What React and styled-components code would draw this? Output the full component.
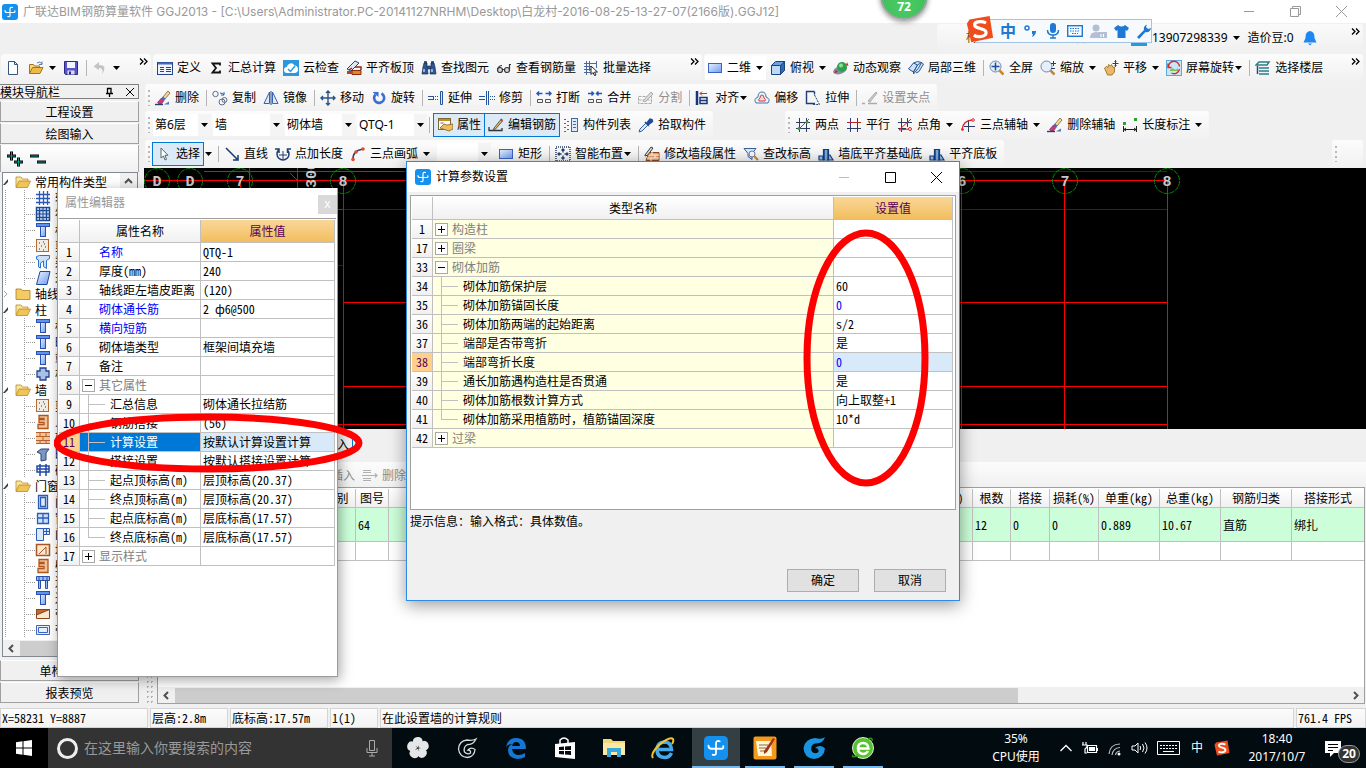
import React from 'react'
import styled, { createGlobalStyle, css } from 'styled-components'

const GlobalStyle = createGlobalStyle`
  * { box-sizing: border-box; }

  body {
    margin: 0;
    overflow: hidden;
    background: #f0f0f0;
    color: #000;
    font: 12px/16px "Noto Sans", "Noto Sans CJK SC", sans-serif;
  }

  button, input, select {
    font: inherit;
    color: inherit;
  }

  button {
    border: 0;
    padding: 0;
    background: none;
  }
`

const line = '#c0c0c0'

const gridFont = css`
  font-family: "Noto Sans CJK SC", sans-serif;
  font-feature-settings: "hwid" 1;
`

/* ---------- icons ---------- */

const rect2d = <rect x="1.5" y="3.5" width="13" height="9" fill="url(#sky)" stroke="#3a63c8" />

const brush = (
  <g>
    <path d="M0 14.5h8" stroke="#24406f" strokeWidth="1.4" />
    <path d="M8 7l5-6 2 2-5 6z" fill="#f3d9a0" stroke="#7d5a2a" strokeWidth=".8" />
    <path d="M6.5 8L9 10.5l1.5-1.5-2.5-2.5z" fill="#3b6fd0" />
    <path d="M2.5 12.5L6.5 8 9 10.5l-2.5 3.5H4z" fill="#c93a7d" stroke="#5a2145" strokeWidth=".6" />
    <path d="M9 14.5l5-3v3z" fill="#4a76c0" />
  </g>
)

const magnifier = (
  <g>
    <path d="M10 10l4.5 4.5" stroke="#c9862b" strokeWidth="2.5" />
    <circle cx="6.5" cy="6.5" r="5.5" fill="#e4effb" stroke="#7288a8" />
  </g>
)

const wallFoot = (
  <g fill="#9cc0ea" stroke="#123f80" strokeWidth="1.2">
    <path d="M1 14v-4h4v4zM10 14V9l2 0 3 5z" />
    <path d="M5.5 14V3.500h5V14z" fill="#2d62a8" />
    <path d="M8 4v10" stroke="#dfeafa" strokeWidth="1" />
  </g>
)

const logo = (
  <g fill="none" stroke="#fff" strokeWidth="1.2" strokeLinecap="round">
    <rect width="16" height="16" rx="3" fill="#1490ee" stroke="none" />
    <path d="M10.500 3.500Q8 2.800 8 5v6.500Q8 13 5.800 12.500" />
    <path d="M3 6.500Q3 8.500 5 8.500h7Q13.300 8.300 12.800 6.800" />
  </g>
)

const sogou = (
  <g>
    <path d="M2 2.5L13.5.5 15.5 13 3 15.5.5 5z" fill="#ef4d1d" />
    <path d="M11.5 4.500C8 3 4.500 4 5 6s6.500 1.500 6.500 4S6.500 13 4.500 11.500" fill="none" stroke="#fff" strokeWidth="1.800" />
  </g>
)

const pillar = (
  <g stroke="#2a4fb5">
    <rect x="1.5" y="1.5" width="13" height="3" fill="#5f93ea" />
    <rect x="5.5" y="4.5" width="5" height="10" fill="url(#sky)" />
  </g>
)

const icons = {
  logo,
  sogou,
  brush,
  wallFoot,
  rect2d,
  newDoc: <path d="M3.5 1.5h6l3 3v10h-9zM9.5 1.5v3h3" fill="#fff" stroke="#33557f" />,
  open: (
    <g stroke="#a8741a">
      <path d="M1.5 13.5v-9h4l1 1.5h5v3" fill="#f7d684" />
      <path d="M1.5 13.5l3-6h10.5l-3 6z" fill="#efb94a" />
      <path d="M9 3q3-2.5 5 1m0-2.5v3h-3" fill="none" stroke="#5b7da8" />
    </g>
  ),
  save: (
    <g>
      <path d="M1.5 1.5h13v13h-12l-1-1z" fill="#5a55c8" stroke="#2d2a86" />
      <path d="M4 2h8v6H4z" fill="#f2f4ff" />
      <path d="M4.5 10.5h7v4h-7z" fill="#d8dcf4" />
      <path d="M6 11.5h2v3H6z" fill="#2d2a86" />
    </g>
  ),
  undo: <path d="M7 2L1.500 6.500 7 10V8q4.500-.500 3 6 6-9-3-9z" fill="#c4c4c4" />,
  define: (
    <g>
      <rect x=".5" y="2.5" width="15" height="12" fill="#eef3fc" stroke="#23468c" />
      <path d="M1 3.5h14" stroke="#3e6bbd" strokeWidth="2" />
      <path d="M3 7.5h4M3 9.5h4M3 11.5h4M9 7.5h5M9 9.5h5M9 11.5h5" stroke="#23468c" />
    </g>
  ),
  sigma: <path d="M12 5.500V3.500H4.500L8 8l-3.500 4.500H12v-2" fill="none" stroke="#111" strokeWidth="1.800" />,
  cloudCheck: (
    <g>
      <rect width="16" height="16" fill="#2b97dc" />
      <path d="M4 13a3 3 0 010-6 4 4 0 017.5-1.5A3.800 3.800 0 0112 13z" fill="#fff" />
      <path d="M5 9l2.5 2.5L12 6" fill="none" stroke="#2b97dc" strokeWidth="1.5" />
    </g>
  ),
  slabTop: (
    <g>
      <path d="M1 9l8-8 4 2-8 8z" fill="#dfe8f5" stroke="#27447c" />
      <path d="M6 10.5h9v4H6z" fill="#d88a2e" stroke="#8a2b12" />
      <path d="M1 11h5v3H1z" fill="#b8412a" />
      <path d="M6 8l-3 2M9 7h6v3" fill="none" stroke="#8a2b12" strokeWidth="1.5" />
    </g>
  ),
  find: (
    <g fill="#2f5590" stroke="#162f5c" strokeWidth=".7">
      <path d="M3 3h3v3l1 8H1l1-7zM10 3h3l1 4 1 7H9l1-8z" />
      <path d="M6.5 6h3v3h-3zM3.5 1.5h2V3h-2zM10.5 1.5h2V3h-2z" />
      <path d="M3 9v3M11 9v3" stroke="#cfe0f5" strokeWidth="1.3" />
    </g>
  ),
  glasses: (
    <g fill="none" stroke="#333" strokeWidth="1.2">
      <circle cx="4" cy="10" r="2.500" fill="#cfd6dd" />
      <circle cx="11" cy="10" r="2.500" fill="#cfd6dd" />
      <path d="M6.500 9.500h2M1.500 9Q3 5.500 6 5.500M13.500 9.500V4.500h1.500" />
    </g>
  ),
  batch: (
    <g fill="none" stroke="#4a6a9a">
      <path d="M3.500 1v14M1 3.500h13M1 6.500h7M1 9.500h7M1 12.500h7M6.500 1v10M13.500 1v7" />
      <path d="M8 6l6.500 6h-3l1.500 3-1.500.5-1.500-3-2 2z" fill="#fff" stroke="#222" />
    </g>
  ),
  cube: (
    <g stroke="#1c4580">
      <path d="M1.5 5.5h9v9h-9z" fill="#bcd9f7" />
      <path d="M1.5 5.5l4-4h9l-4 4z" fill="#6d9fe0" />
      <path d="M10.5 5.5l4-4v9l-4 4z" fill="#3568b4" />
    </g>
  ),
  orbit: (
    <g>
      <ellipse cx="7" cy="10" rx="7" ry="4" fill="#7f8fa8" transform="rotate(-20 7 10)" />
      <circle cx="9" cy="7" r="5" fill="#2fa04a" />
      <circle cx="8" cy="5.5" r="2" fill="#8be09a" />
      <path d="M1 13l4-1-2-2zM14 2l1.5 4L13 5z" fill="#c42222" />
    </g>
  ),
  local3d: (
    <g fill="#cfe2f7" stroke="#27578f">
      <path d="M.500 9l5-6 4 2-4 7zM5.500 3l4-1.500 4 1-4 2.500M9.500 5l-4 7v2l5-6 3-5.500 2 1.500-4.500 7.500-3 1.500" />
    </g>
  ),
  full: (
    <g>
      {magnifier}
      <path d="M6.5 2.5v8M2.5 6.5h8" stroke="#1d4d9c" strokeWidth="1.5" />
    </g>
  ),
  zoomer: (
    <g>
      {magnifier}
      <path d="M11 3.5h5M13.5 1v5M11 8.5h4" stroke="#1f4170" />
    </g>
  ),
  pan: (
    <g>
      <path d="M1.500 8l2-1.500 1.500 1 .5-3 2 1.500 1-1.500 1.500 3 1.500-.5v5L9 15H4.500z" fill="#eab868" stroke="#93661e" strokeWidth=".8" />
      <path d="M12.500.500v6M9.500 3.500h6M11.500 1.500l1-1 1 1M11.500 5.500l1 1 1-1" fill="none" stroke="#26426f" />
    </g>
  ),
  screenRotate: (
    <g>
      <rect x=".5" y=".5" width="15" height="15" fill="#c9e6f7" stroke="#5aa9dc" />
      <path d="M4 10q2-3 4-1t4-1v3H4z" fill="#7cc05a" />
      <path d="M2.500 7a5.500 5.500 0 0111-.5M13.500 9a5.500 5.500 0 01-8 4M2 3.500V7.500h3.500" fill="none" stroke="#d42d2d" strokeWidth="1.4" />
    </g>
  ),
  floors: (
    <g fill="none" stroke="#2c7c86" strokeWidth="1.5">
      <path d="M1 5l3-3h10l-2 3zM4 8h10M4 11h10M4 14h10" />
      <path d="M2.5 6v8" stroke="#1d4a80" />
    </g>
  ),
  copy: (
    <g fill="none" stroke="#5d6f8c">
      <circle cx="3.5" cy="4" r="2.7" />
      <circle cx="10" cy="12" r="3" />
      <circle cx="12.500" cy="10" r="2.500" />
      <path d="M8 3q3 0 4 2m0-3v3H9" stroke="#2d56a8" />
    </g>
  ),
  mirror: (
    <g fill="none" stroke="#3b64b0">
      <path d="M6.5 2v11.500H1zM9.5 2v11.500H15z" fill="#dce9fa" />
      <path d="M8 1v14" stroke="#28467c" />
    </g>
  ),
  move: <path d="M8 1v14M1 8h14M6 3l2-2 2 2M6 13l2 2 2-2M3 6L1 8l2 2M13 6l2 2-2 2" fill="none" stroke="#2e5288" strokeWidth="1.4" />,
  rotate: (
    <g fill="none" stroke="#3a6fd0" strokeWidth="2.600">
      <path d="M10.500 3.500a5 5 0 11-6 1" />
      <path d="M1.500 2h6v5z" fill="#3a6fd0" stroke="none" />
    </g>
  ),
  extend: (
    <g fill="none" stroke="#24549c">
      <path d="M0 6.500h5M0 9.500h5M5.500 6v4" />
      <path d="M7 6.500h4M7 9.500h4" strokeDasharray="1 1" />
      <path d="M12.500 1.500h2v13h-2z" fill="#dce9fa" />
    </g>
  ),
  trim: (
    <g fill="none" stroke="#24549c">
      <path d="M0 6.500h6M0 9.500h6M7.500 1v14M9.500 1v14" />
      <path d="M11 6.500h5M11 9.500h5" strokeDasharray="1 1" />
    </g>
  ),
  breakup: (
    <g fill="none" stroke="#2458b8">
      <path d="M6.500 3.500H1m2-2l-2 2 2 2M9.500 3.500H15m-2-2l2 2-2 2" strokeWidth="1.500" />
      <path d="M1.500 9.500h5v3h-5zM9.500 9.500h5v3h-5z" stroke="#555" />
    </g>
  ),
  merge: (
    <g fill="none" stroke="#2458b8">
      <path d="M1 3.500h5.500m-2-2l2 2-2 2M15 3.500H9.500m2-2l-2 2 2 2" strokeWidth="1.500" />
      <path d="M1.500 9.500h5v3h-5zM9.500 9.500h5v3h-5z" stroke="#555" />
    </g>
  ),
  split: (
    <g fill="none" stroke="#aaa">
      <path d="M.5 6.500h13v7H.5zM.5 10h13" strokeDasharray="3 1" />
      <path d="M5 11l8-9 2 2-8 8z" fill="#ddd" />
    </g>
  ),
  align: (
    <g fill="none" stroke="#19357a" strokeWidth="1.5">
      <path d="M2 1v14" strokeWidth="2.5" />
      <path d="M5 7.5h7v6H5zM5 10.500h7" />
      <path d="M12 3.5H5m2-2l-2 2 2 2" stroke="#b33" strokeWidth="1" />
    </g>
  ),
  offset: (
    <g fill="none" stroke="#4777a8">
      <path d="M2 13q-3-4 2-6 0-5 4-5t4 5q5 2 2 6z" fill="#eaf1f8" />
      <path d="M5 11q-1-2 1-3 0-3 2-3t2 3q2 1 1 3z" stroke="#d24444" fill="#f8d4d4" />
    </g>
  ),
  stretch: (
    <g fill="none" stroke="#1d3f78">
      <path d="M10 13.5H1.5v-12h8M9.5 1.5v3" strokeWidth="1.4" />
      <path d="M9.5 5l5 9.500H7" strokeDasharray="2 1" />
    </g>
  ),
  gripPoint: (
    <g fill="none" stroke="#aaa">
      <path d="M0 13.5h3M6 13.5h9" strokeWidth="1.5" />
      <path d="M6 11l8-9 1 1-7 9z" fill="#ccc" />
    </g>
  ),
  props: (
    <g>
      <rect x="1.5" y="1.5" width="12" height="11" fill="#fff" stroke="#7b6a3a" />
      <path d="M2 3h11" stroke="#c78a1d" strokeWidth="2" />
      <path d="M3 11l4-4 3 1 6-1v5l-4 2z" fill="#eebd5e" stroke="#8a6116" strokeWidth=".8" />
      <path d="M3.5 6h3" stroke="#666" />
    </g>
  ),
  editBar: (
    <g fill="none" stroke="#333">
      <path d="M1 10v3.500h13V11" strokeWidth="1.300" />
      <path d="M6 11l7-8.500 1.500 1.500-7 8-2 .500z" fill="#e9c06a" strokeWidth=".8" />
      <path d="M12 2.500l1.500-1 1.500 1.500-1 1.500z" fill="#c33" stroke="none" />
    </g>
  ),
  list: (
    <g fill="none" stroke="#44699f">
      <path d="M1 2.500h2M1 6.500h2M1 10.500h2M1 14.500h2M4 4.500h2M4 8.500h2M4 12.500h2" />
      <rect x="8.5" y="1.5" width="6" height="13" fill="#dfeafa" />
      <path d="M10 4.500h3M10 7.500h3M10 10.500h3" />
    </g>
  ),
  picker: (
    <g>
      <path d="M1 15l1-3 6-6 2 2-6 6z" fill="#dbeafb" stroke="#35629f" />
      <path d="M7 5l4 4M9 6l3-4 2 .5.5 2-4 3z" fill="#1f4c99" stroke="#1f4c99" strokeWidth="1.5" />
    </g>
  ),
  twoPoint: (
    <g fill="none">
      <path d="M4.5 1v14M11.5 1v14M1 5.5h14M1 11.5h14" stroke="#2a3c66" />
      <path d="M3 13L14 2" stroke="#c93030" />
      <circle cx="4" cy="11.5" r="1.5" fill="#33a02c" />
      <circle cx="12" cy="5" r="1.5" fill="#33a02c" />
    </g>
  ),
  parallel: (
    <g fill="none">
      <path d="M4.5 1v14M11.5 1v14" stroke="#2a3c8a" />
      <path d="M1 5.5h14" stroke="#b22" />
      <path d="M1 11.5h14" stroke="#2a3c66" />
    </g>
  ),
  pointAngle: (
    <g fill="none">
      <path d="M4.5 1v14M10.5 1v9M1 5.5h14M1 11.5h8" stroke="#2a3c66" />
      <path d="M2 13L14 2M2 13l10-1" stroke="#d22" />
      <circle cx="13" cy="12" r="1.5" stroke="#d22" />
    </g>
  ),
  threeAxis: (
    <g fill="none">
      <path d="M8.5 4v11M4 9.5h11" stroke="#2a3c66" />
      <path d="M2 13Q3 3 13 3" stroke="#d22" strokeWidth="1.3" />
      <circle cx="2.5" cy="12.5" r="1.3" fill="#d22" />
      <circle cx="13" cy="3" r="1.3" fill="#fff" stroke="#d22" />
    </g>
  ),
  dimension: (
    <g fill="none" stroke="#222">
      <path d="M1.5 9v6M14.5 9v6M2 12.500h12M4 11l-2 1.500 2 1.500M12 11l2 1.500-2 1.500" />
      <path d="M1 6.500h3M12 2.500h3" stroke="#33a02c" strokeWidth="3" />
    </g>
  ),
  cursor: <path d="M5 2v10l2.5-2 1.500 4 1.500-.7-1.500-4H12z" fill="#fff" stroke="#566" />,
  lineTool: <path d="M2 2l11 11M14 9v5H9" fill="none" stroke="#173a72" strokeWidth="1.5" />,
  pointLen: (
    <g fill="none" stroke="#1e3d74" strokeWidth="1.5">
      <path d="M3.500 4a6 6 0 109 0M0 3h4v4M12.500 7V3H16" />
      <path d="M8 5v8M4 9h8" strokeWidth="1" />
    </g>
  ),
  arc3: (
    <g fill="none" stroke="#2a3c66">
      <path d="M3 14Q2 5 13 3" strokeWidth="1.3" />
      <g fill="#e24a32" stroke="none">
        <circle cx="3" cy="13.5" r="1.8" />
        <circle cx="6" cy="6" r="1.8" />
        <circle cx="13" cy="3" r="1.8" />
      </g>
    </g>
  ),
  smart: (
    <g fill="none" stroke="#243c6e">
      <rect x="1" y="1" width="14" height="14" strokeDasharray="1 1" strokeWidth="1.500" />
      <path d="M8 3v3.500M8 9.500V13M3 8h3.500M9.500 8H13M6.500 4.500L8 3l1.500 1.500M6.500 11.500L8 13l1.500-1.500M4.500 6.500L3 8l1.500 1.500M11.500 6.500L13 8l-1.500 1.500" strokeWidth="1.300" />
    </g>
  ),
  wallEdit: (
    <g>
      <path d="M5 6.500h10v8H2z" fill="#f0a060" stroke="#8d4a1c" />
      <path d="M4 9h11M3 12h12M8 6v3M11 9v3M7 12v3" stroke="#fff" />
      <path d="M1 9l6-8 2 1-5 7-3 1z" fill="#f5dfa2" stroke="#2b3e68" />
    </g>
  ),
  levelCheck: (
    <g>
      <path d="M1 2.5h12l-4 5v6l-4-3v-3z" fill="#dde9f8" stroke="#39609b" />
      <circle cx="9" cy="8" r="3" fill="#f3f8ff" stroke="#6b7e9c" />
      <path d="M11 10l4 4" stroke="#c9862b" strokeWidth="2.2" />
    </g>
  ),
  rowDelete: <path d="M1 3.500h8M1 5.500h8M0 8.500h15m-2-2l2 2-2 2M1 11.500h8M1 13.500h8" fill="none" stroke="#b0b0b0" strokeWidth="1.200" />,
  bell: <path d="M8 1q5 1 4.500 7l2 4.500H1.500l2-4.500Q3 2 8 1zM6 13.500h4l-2 2z" fill="#1e88f2" />,

  folderOpen: (
    <g stroke="#b98a24" strokeWidth=".8">
      <path d="M1 13V3h5l1.500 2H13v3" fill="#fbe3a0" />
      <path d="M1 13.500l3-6.500h11.500l-3 6.500z" fill="#f2c455" />
    </g>
  ),
  folder: <path d="M1 13.500V3h5l1.500 1.500H15v9z" fill="#f3cb62" stroke="#a87d22" strokeWidth=".8" />,
  tGrid: <path d="M1 4.500h14M1 8.500h14M1 12.500h14M4.500 1v14M8.500 1v14M12.500 1v14" fill="none" stroke="#2c58b8" strokeWidth="1.3" />,
  tSlab: (
    <g fill="none" stroke="#1d4a92">
      <path d="M1.500 1.500h13v13h-13zM4.500 4.500h7v7h-7z" strokeWidth="1.500" fill="#cfe0f7" />
      <path d="M1.500 8h13M8 1.500v13M1.500 4.500h13M1.500 11.500h13M4.500 1.500v13M11.500 1.500v13" />
    </g>
  ),
  tPillar: pillar,
  tWall: (
    <g>
      <rect x="1.5" y="1.5" width="12" height="12" fill="#f2ece6" stroke="#b5692f" />
      <path d="M4 5h1M8 4h1M6 8h1M10 9h1M4 11h1M9 6h1M8 12h1" stroke="#333" />
    </g>
  ),
  tBeam: <path d="M1.500 2.500l3-1h10v3l-3 2v8l-3-2V7l-3 2v5l-2-1V6l-2-1z" fill="#cfe0f7" stroke="#2a74c8" />,
  tPlate: <path d="M5 1.5h10l-3 13H1.5z" fill="url(#sky)" stroke="#2048a0" />,
  tCross: <path d="M5 2h6v3h3v6h-3v3H5v-3H2V5h3z" fill="#a9c0e8" stroke="#27468e" strokeWidth="1.3" />,
  tBrick: (
    <g>
      <rect x="1" y="2" width="14" height="12" fill="#f3c69c" />
      <path d="M1 2.500h14M1 6.500h14M1 10.500h14M1 13.500h14M5 2v4M11 2v4M8 6v4M5 10v4M11 10v4" stroke="#b8602a" />
    </g>
  ),
  tStep: <path d="M4 1.5h9v13H3v-4h6v-2H4v-3h5v-1H4z" fill="#f4c49a" stroke="#b0561e" strokeWidth="1.3" />,
  tBox: <path d="M2 6l4-3h8l-3 4v7l-5 1V8z" fill="#7d97c4" stroke="#2c4478" />,
  tOpening: <path d="M2 4h12v6H2zM5 2v12M11 2v12M2 7h12" fill="none" stroke="#2348a8" strokeWidth="1.5" />,
  tDoor: <path d="M3.5 1.500h9v13h-9zM5.500 3.500h5v9h-5z" fill="#dce9fb" stroke="#2c5cb8" strokeWidth="1.3" />,
  tWindow: <path d="M2.5 3.500h11v10h-11zM8 3.500v10M2.500 8h11" fill="#cfe1fb" stroke="#2c5cb8" strokeWidth="1.3" />,
  tDoorWin: <path d="M1.5 2.500h7v12h-7zM8.500 2.500h6v6h-6zM11.500 2.500v6M8.500 5.500h6" fill="#dce9fb" stroke="#2c5cb8" />,
  tHole: (
    <g fill="#fbe7d2" stroke="#a8551f">
      <rect x="1.5" y="2.5" width="13" height="11" strokeWidth="1.5" />
      <path d="M4 12l7-7M11 5v7" />
    </g>
  ),
  tLintel: <path d="M1.5 2.500h13v4h-13zM3.500 6.500v8h2v-8M10.500 6.500v8h2v-8M4 2v4M8 2v4M12 2v4" fill="#9fc0f0" stroke="#2850a8" />,
  tSlope: (
    <g stroke="#8a4418">
      <path d="M1.500 3.500h13v9h-13z" fill="#fbe7d2" />
      <path d="M1.500 3.500h13L1.500 9z" fill="#c06a2c" />
    </g>
  ),
  tFrame: <path d="M1.5 3.500h13v9h-13zM3.500 5.500h9v5h-9z" fill="#e8f0fc" stroke="#3c64c0" />,
}

const Svg = styled.svg`
  display: block;
  flex: none;
`

const Icon = ({ name, size = 16 }) => (
  <Svg width={size} height={size} viewBox="0 0 16 16" aria-hidden="true">{icons[name]}</Svg>
)

const CaretSvg = styled(Svg)`
  margin-left: ${props => props.$space}px;
`

const Caret = ({ space = 1 }) => (
  <CaretSvg $space={space} width="7" height="4" viewBox="0 0 7 4"><path d="M0 0h7L3.500 4z" fill="#000" /></CaretSvg>
)

const MoreButton = styled.button`
  align-self: flex-start;
  margin: 4px 3px 0 auto;
`

const More = () => (
  <MoreButton aria-label="更多">
    <Svg width="9" height="7" viewBox="0 0 9 7">
      <path d="M1 .5l3 3-3 3M5 .5l3 3-3 3" fill="none" stroke="#000" strokeWidth="1.3" />
    </Svg>
  </MoreButton>
)

/* ---------- window frame ---------- */

const Screen = styled.div`
  position: relative;
  display: flex;
  flex-direction: column;
  min-height: 100vh;
`

const TitleBar = styled.header`
  display: flex;
  align-items: center;
  height: 23px;
  padding: 0 12px 0 2px;
  gap: 5px;
  background: #fff;
  color: #999;
  white-space: nowrap;
`

const WindowTitle = styled.h1`
  flex: 1;
  margin: 0;
  font: inherit;
  font-family: Inter, "Noto Sans CJK SC", sans-serif;
`

const WindowButton = styled.button`
  width: 26px;
  height: 20px;
  margin-left: 15px;
  display: flex;
  align-items: center;
  justify-content: center;
`

const AccountRow = styled.div`
  display: flex;
  height: 31px;
  padding: 1px 3px 3px;
  justify-content: flex-end;
`

const AccountBar = styled.div`
  display: flex;
  align-items: center;
  width: 426px;
  padding-left: 29px;
  border-radius: 3px;
  background: linear-gradient(#fafafa, #f0f0f0);
  white-space: nowrap;
`

const Hint = styled.a`
  width: 165px;
  color: #7a4a12;
  text-decoration: none;
`

const Phone = styled.button`
  display: flex;
  align-items: center;
  gap: 5px;
  margin: 0 8px 0 5px;
`

const Coins = styled.span`
  margin-right: 8px;
`

const ToolRow = styled.div`
  display: flex;
  height: ${props => props.$height}px;
  gap: 2px;
  padding: 0 3px 0 1px;
`

const Bar = styled.div`
  display: flex;
  align-items: center;
  flex: ${props => (props.$grow ? '1' : 'none')};
  min-width: ${props => props.$min || 0}px;
  height: 27px;
  margin-left: ${props => (props.$right ? 'auto' : `${props.$gap || 0}px`)};
  padding-left: ${props => props.$pad || 0}px;
  border-radius: 3px;
  background: linear-gradient(#fcfcfc, #f1f1f1);
`

const Grip = styled.i`
  flex: none;
  width: 2px;
  height: 16px;
  margin: 0 ${props => props.$space || 5}px 0 3px;
  background: repeating-linear-gradient(#b8b8b8 0 2px, transparent 2px 5px);
`

const Sep = styled.i`
  flex: none;
  width: 1px;
  height: 16px;
  margin-right: ${props => props.$space || 5}px;
  background: #b4b4b4;
`

const ToolButton = styled.button`
  display: flex;
  align-items: center;
  flex: none;
  height: 24px;
  gap: 4px;
  margin-right: 7px;
  white-space: nowrap;
  color: ${props => (props.disabled ? '#8f8f8f' : '#000')};
  ${props => props.$active && css`
    margin-right: ${props.$next || 0}px;
    padding: 0 3px;
    border: 1px solid #0078d7;
    background: #dceaf7;
  `}
  ${props => props.$field && css`
    margin-right: 4px;
    padding: 0 3px 0 2px;
    background: #fff;
  `}
`

const ArrowButton = styled.button`
  width: 8px;
  margin-right: 6px;
`

const Tool = ({ icon, label, caret, ...rest }) => (
  <ToolButton {...rest}>
    {icon && <Icon name={icon} />}
    {label && <span>{label}</span>}
    {caret && <Caret space={caret === 'tight' ? -3 : 1} />}
  </ToolButton>
)

const Combo = styled.span`
  display: flex;
  align-items: center;
  width: ${props => props.$width}px;
  height: 22px;
  margin-right: ${props => props.$gap || 2}px;
  padding-right: 3px;
  background: linear-gradient(90deg, #fff calc(100% - 13px), #f4f4f4 0);

  select {
    flex: 1;
    min-width: 0;
    height: 20px;
    padding: 0 2px;
    border: 0;
    appearance: none;
    background: none;
  }
`

const ComboBox = ({ label, value, width, gap }) => (
  <Combo $width={width} $gap={gap}>
    <select aria-label={label} defaultValue={value}><option>{value}</option></select>
    <Caret />
  </Combo>
)

const Tools = ({ items }) => items.map((item, i) => (
  item === '|' ? <Sep key={i} /> : <Tool key={i} icon={item[0]} label={item[1]} caret={item[2]} disabled={item[3]} />
))

const viewTools = [
  ['cube', '俯视', true], ['orbit', '动态观察'], ['local3d', '局部三维'], '|', ['full', '全屏'],
  ['zoomer', '缩放', true], ['pan', '平移', true], ['screenRotate', '屏幕旋转', 'tight'], '|', ['floors', '选择楼层'],
]

const mainTools = [
  ['define', '定义'], ['sigma', '汇总计算'], ['cloudCheck', '云检查'], ['slabTop', '平齐板顶'],
  ['find', '查找图元'], ['glasses', '查看钢筋量'], ['batch', '批量选择'],
]

const editTools = [
  ['brush', '删除'], '|', ['copy', '复制'], ['mirror', '镜像'], '|', ['move', '移动'], ['rotate', '旋转'], '|',
  ['extend', '延伸'], ['trim', '修剪'], '|', ['breakup', '打断'], ['merge', '合并'], ['split', '分割', false, true], '|',
  ['align', '对齐', 'tight'], ['offset', '偏移'], ['stretch', '拉伸'], '|', ['gripPoint', '设置夹点', false, true],
]

const axisTools = [
  ['twoPoint', '两点'], ['parallel', '平行'], ['pointAngle', '点角', true], ['threeAxis', '三点辅轴', true],
  ['brush', '删除辅轴'], ['dimension', '长度标注', true],
]

const wallTools = [
  ['rect2d', '矩形'], '|', ['smart', '智能布置', 'tight'], '|', ['wallEdit', '修改墙段属性'],
  ['levelCheck', '查改标高'], ['wallFoot', '墙底平齐基础底'], ['wallFoot', '平齐底板'],
]

/* ---------- left navigation ---------- */

const Body = styled.div`
  display: flex;
  flex: 1;
`

const Nav = styled.nav`
  display: flex;
  flex-direction: column;
  flex: none;
  width: 139px;
  margin-right: 5px;
  ${gridFont}
`

const NavHeader = styled.div`
  display: flex;
  align-items: center;
  height: 15px;
  margin-bottom: 2px;
  border: 1px solid #808080;
  border-left: 0;
  gap: 12px;
  padding-right: 4px;

  span { flex: 1; }
`

const NavButton = styled.button`
  height: 21px;
  margin-bottom: 1px;
  border: 1px solid #a0a0a0;
  border-top-color: #fff;
  background: #f0f0f0;
`

const NavStrip = styled.div`
  display: flex;
  height: 27px;
  padding: 5px 5px;
  border: 1px solid #a8a8a8;
  border-width: 0 1px 0 1px;
  background: linear-gradient(#fff, #f0f0f0);
`

const TreeBox = styled.div`
  display: flex;
  flex-direction: column;
  flex: 1 1 0;
  min-height: 0;
  overflow: hidden;
  margin: 0 1px 3px 2px;
  border: 1px solid #828790;
  background: #fff;
`

const TreeBody = styled.div`
  display: flex;
  flex: 1 1 0;
  min-height: 0;
  overflow: hidden;
`

const Tree = styled.ul`
  flex: 1;
  margin: 0;
  padding: 1px 0 0;
  overflow: hidden;
  list-style: none;
  white-space: nowrap;

  ul {
    margin: 0;
    padding: 0;
    list-style: none;
  }
`

const TreeRow = styled.div`
  display: flex;
  align-items: center;
  height: 16px;
  gap: 4px;

  ${props => props.$leaf && css`
    background:
      repeating-linear-gradient(#999 0 1px, transparent 1px 2px) 2px 0 / 1px 16px no-repeat,
      repeating-linear-gradient(#999 0 1px, transparent 1px 2px) 21px 0 / 1px 16px no-repeat,
      repeating-linear-gradient(90deg, #999 0 1px, transparent 1px 2px) 21px 8px / 11px 1px no-repeat;
    padding-left: 32px;
  `}
`

const TreeMark = styled(Svg)`
  margin-right: 2px;
`

const ScrollButton = styled.button`
  display: flex;
  align-items: center;
  justify-content: center;
  width: 17px;
  height: 16px;
  flex: none;
  background: #f0f0f0;
`

const tree = [
  { name: '常用构件类型', open: true, items: [['tGrid', '轴网'], ['tSlab', '筏板基础'], ['tPillar', '框柱'], ['tWall', '剪力墙'], ['tBeam', '梁'], ['tPlate', '现浇板']] },
  { name: '轴线', open: false, items: [] },
  { name: '柱', open: true, items: [['tPillar', '框柱'], ['tPillar', '暗柱'], ['tPillar', '端柱'], ['tCross', '构造柱']] },
  { name: '墙', open: true, items: [['tWall', '剪力墙'], ['tStep', '人防门框墙'], ['tBrick', '砌体墙'], ['tBox', '暗梁'], ['tOpening', '砌体加筋']] },
  { name: '门窗洞', open: true, items: [['tDoor', '门'], ['tWindow', '窗'], ['tDoorWin', '门联窗'], ['tHole', '墙洞'], ['tStep', '壁龛'], ['tLintel', '连梁'], ['tPillar', '过梁'], ['tSlope', '带形洞'], ['tFrame', '带形窗']] },
  { name: '梁', open: true, items: [] },
]

const ScrollTrack = styled.div`
  display: flex;
  align-items: center;
  height: 16px;
  flex: none;
  background: #f0f0f0;
`

const ScrollThumb = styled.div`
  flex: ${props => props.$grow};
  height: 15px;
  background: #cdcdcd;
`

const TrackRest = styled.span`
  flex: 329;
`

const Chevron = ({ d }) => (
  <Svg width="9" height="9" viewBox="0 0 9 9"><path d={d} fill="none" stroke="#505050" strokeWidth="2" /></Svg>
)

const Navigation = () => (
  <Nav>
    <NavHeader>
      <span>模块导航栏</span>
      <Svg width="9" height="10" viewBox="0 0 9 10"><path d="M2.500 1v5M6 1v5M2 1.500h4.500M1 6.500h7M4.500 7v3" fill="none" stroke="#000" strokeWidth="1.3" /></Svg>
      <Svg width="8" height="8" viewBox="0 0 8 8"><path d="M0 0l8 8M8 0L0 8" stroke="#000" /></Svg>
    </NavHeader>
    <NavButton>工程设置</NavButton>
    <NavButton>绘图输入</NavButton>
    <NavStrip>
      <Svg width="42" height="18" viewBox="0 0 42 18">
        <path d="M1 6h9M5.500 1.500v9M8 12h9M12.500 7.500v9M24 6h9M31 12h9" stroke="#000" strokeWidth="3" />
        <path d="M1.500 6h8M5.500 2v8M8.500 12h8M12.500 8v8M24.500 6h8M31.500 12h8" stroke="#0b9a8a" strokeWidth="1" />
      </Svg>
    </NavStrip>
    <TreeBox>
      <TreeBody>
        <Tree>
          {tree.map(group => (
            <li key={group.name}>
              <TreeRow>
                <TreeMark width="6" height="8" viewBox="0 0 6 8">
                  {group.open ? <path d="M0 7l5-6v3L2 7z" fill="#404040" /> : <path d="M1 1l3 3-3 3" fill="none" stroke="#a0a0a0" />}
                </TreeMark>
                <Icon name={group.open ? 'folderOpen' : 'folder'} />
                {group.name}
              </TreeRow>
              <ul>
                {group.items.map(([icon, label]) => (
                  <li key={label}><TreeRow $leaf><Icon name={icon} />{label}</TreeRow></li>
                ))}
              </ul>
            </li>
          ))}
        </Tree>
        <ScrollButton aria-label="向上滚动"><Chevron d="M1 6l3.500-3.500L8 6" /></ScrollButton>
      </TreeBody>
      <ScrollTrack>
        <ScrollButton aria-label="向左滚动"><Chevron d="M6 1L2.500 4.500 6 8" /></ScrollButton>
        <ScrollThumb $grow={1} />
      </ScrollTrack>
    </TreeBox>
    <NavButton>单构件输入</NavButton>
    <NavButton>报表预览</NavButton>
  </Nav>
)

/* ---------- drawing area ---------- */

const Workspace = styled.main`
  display: flex;
  flex-direction: column;
  flex: 1;
  min-width: 0;
`

const Canvas = styled.svg`
  display: block;
  width: 100%;
  height: 261px;
  background: #000;

  text {
    fill: #c8c8c8;
    font: 700 15px "Liberation Mono", monospace;
  }
`

const bubbles = [[13, 'D'], [46, 'D'], [96, '7'], [199, '8'], [818, '6'], [921, '7'], [1023, '8']]

const Drawing = () => (
  <Canvas>
    <g stroke="#8a0000">
      <path d="M260 3.5H1023M199 41.5H1023M193 97.5H199" />
    </g>
    <g stroke="#008000" fill="none">
      <path d="M60 3.5H260M105.5 0V22M153.5 0V22M146 5l8 8M193 41.5h6" />
    </g>
    <g stroke="#ff0000">
      <path d="M0 12.5H1023M96.5 12V22M199.5 12V261M817.5 12V261M920.5 12V261M1023.5 12V261" />
      <path d="M199 134.5H1023M199 218.5H1023M193 256.5H1023" />
    </g>
    {bubbles.map(([x, name]) => (
      <g key={x}>
        <circle cx={x} cy="13" r="12.5" fill="none" stroke="#008c00" strokeDasharray="5 1" />
        <text x={x} y="18" textAnchor="middle">{name}</text>
      </g>
    ))}
    <text transform="translate(172 20) rotate(-90)">300</text>
  </Canvas>
)

const Lower = styled.section`
  display: flex;
  flex-direction: column;
  flex: 1;
  ${gridFont}
`

const TabRow = styled.div`
  display: flex;
  align-items: center;
  height: 33px;
  padding: 0 0 4px 181px;
`

const TabButton = styled.button`
  height: 20px;
  padding: 0 3px 0 0;
  border-right: 1px solid #0078d7;
`

const BarTools = styled.div`
  display: flex;
  align-items: center;
  height: 25px;
  margin-left: 13px;
  padding-left: 174px;
  background: linear-gradient(#fcfcfc, #f1f1f1);
`

const LowerMain = styled.div`
  display: flex;
  flex: 1;
`

const Splitter = styled.div`
  width: 13px;
  background:
    radial-gradient(circle, #b0b0b0 1px, transparent 1px) 1px 100% / 5px 5px repeat-y,
    radial-gradient(circle, #b0b0b0 1px, transparent 1px) 5px 100% / 5px 5px repeat-y;
`

const GridBox = styled.div`
  display: flex;
  flex-direction: column;
  justify-content: space-between;
  flex: 1;
  min-width: 0;
  margin-right: 1px;
  padding: 1px 0 0;
  border: 1px solid #a0a0a0;
  background: #fff;
`

const BarGrid = styled.table`
  width: 100%;
  table-layout: fixed;
  border-spacing: 0;
  white-space: nowrap;

  th, td {
    height: 19px;
    padding: 0 2px;
    border: solid ${line};
    border-width: 0 1px 1px 0;
    text-align: left;
    font-weight: 400;
    line-height: 16px;
  }

  th {
    padding: 0;
    text-align: center;
    background: linear-gradient(#fff, #f0f0f0);
  }

  tr > :last-child { border-right: 0; }
`

const BarRow = styled.tr`
  td {
    height: 34px;
    background: #ccffd9;
  }
`

const barColumns = [
  ['', 160], ['级别', 38], ['图号', 33], ['', null], ['长度(mm)', 66],
  ['根数', 38], ['搭接', 39], ['损耗(%)', 49], ['单重(kg)', 61], ['总重(kg)', 61], ['钢筋归类', 71], ['搭接形式', 72],
]

const barValues = ['', '  φ', '64', '', '', '12', '0', '0', '0.889', '10.67', '直筋', '绑扎']

const BarPanel = () => (
  <Lower>
    <TabRow><TabButton>输入</TabButton></TabRow>
    <BarTools>
      <Tool label="插入" disabled />
      <Tool icon="rowDelete" label="删除" disabled />
    </BarTools>
    <LowerMain>
      <Splitter />
      <GridBox>
        <BarGrid>
          <colgroup>{barColumns.map(([, width], i) => <col key={i} width={width || undefined} />)}</colgroup>
          <thead><tr>{barColumns.map(([name], i) => <th key={i}>{name}</th>)}</tr></thead>
          <tbody>
            <BarRow>{barValues.map((value, i) => <td key={i}>{value}</td>)}</BarRow>
            <tr>{barValues.map((_, i) => <td key={i} />)}</tr>
          </tbody>
        </BarGrid>
        <ScrollTrack>
          <ScrollButton aria-label="向左滚动"><Chevron d="M6 1L2.500 4.500 6 8" /></ScrollButton>
          <ScrollThumb $grow={842} />
          <TrackRest />
          <ScrollButton aria-label="向右滚动"><Chevron d="M3 1l3.500 3.500L3 8" /></ScrollButton>
        </ScrollTrack>
      </GridBox>
    </LowerMain>
  </Lower>
)

/* ---------- property grids ---------- */

const Grid = styled.table`
  border-spacing: 0;
  table-layout: fixed;
  white-space: nowrap;
  width: ${props => props.$width}px;
  ${gridFont}

  th, td {
    height: 19px;
    padding: 0;
    border: solid ${line};
    border-width: 0 1px 1px 0;
    font-weight: 400;
    line-height: 16px;
  }

  tbody th {
    background: linear-gradient(#fff, #f0f0f0);
  }
`

const HeadCell = styled.th`
  && {
    height: 23px;
    color: ${props => (props.$hot ? '#5a0057' : '#000')};
    background: ${props => (props.$hot ? 'linear-gradient(#f9d79a, #f2be5c)' : 'linear-gradient(#fff, #f0f0f0)')};
  }
`

const NumberCell = styled.th`
  && {
    ${props => props.$current && css`
      color: #5a0057;
      background: #ffd08a;
    `}
  }
`

const NameCell = styled.td`
  color: ${props => props.$color};
  background: ${props => props.$bg};
  font-feature-settings: ${props => (props.$wide ? 'normal' : 'inherit')};
`

const NameInner = styled.div`
  display: flex;
  align-items: center;
  height: 18px;
`

const ValueCell = styled.td`
  && {
    padding-left: 2px;
    color: ${props => (props.$changed ? '#00f' : '#000')};
    background: ${props => (props.$current ? '#d8eaf9' : '#fff')};
  }
`

const Expander = styled.button`
  display: flex;
  align-items: center;
  justify-content: center;
  width: 13px;
  height: 13px;
  margin: 0 4px 0 2px;
  border: 1px solid #a8a8a8;
  background: #fff;
`

const Branch = styled.i`
  width: 17px;
  height: 19px;
  margin: 0 5px -1px 8px;
  background:
    linear-gradient(${line}, ${line}) 0 0 / 1px ${props => (props.$last ? 10 : 19)}px no-repeat,
    linear-gradient(${line}, ${line}) 0 9px / 17px 1px no-repeat;
`

const Indent = styled.i`
  width: 19px;
`

const PropertyGrid = ({ width, columns, heads, rows, current, selectName, nameBg, wide }) => (
  <Grid $width={width}>
    <colgroup>{columns.map((w, i) => <col key={i} width={w} />)}</colgroup>
    <thead>
      <tr>
        <HeadCell />
        <HeadCell>{heads[0]}</HeadCell>
        <HeadCell $hot>{heads[1]}</HeadCell>
      </tr>
    </thead>
    <tbody>
      {rows.map(([no, kind, name, value = '', changed]) => {
        const isCurrent = no === current
        const selected = isCurrent && selectName
        let color = kind === '+' || kind === '-' ? '#808080' : '#000'
        if (kind === 'key') color = '#00f'
        if (selected) color = '#fff'
        return (
          <tr key={no}>
            <NumberCell $current={isCurrent}>{no}</NumberCell>
            <NameCell $color={color} $bg={selected ? '#0078d7' : nameBg} $wide={wide}>
              <NameInner>
                {(kind === '+' || kind === '-') && (
                  <Expander aria-label={kind === '+' ? '展开' : '折叠'}>
                    <Svg width="7" height="7" viewBox="0 0 7 7"><path d={kind === '+' ? 'M0 3.500h7M3.500 0v7' : 'M0 3.500h7'} stroke="#000" /></Svg>
                  </Expander>
                )}
                {(kind === 'child' || kind === 'last') && <Branch $last={kind === 'last'} />}
                {(kind === 'key' || kind === 'plain') && <Indent />}
                {name}
              </NameInner>
            </NameCell>
            <ValueCell $current={isCurrent} $changed={changed}>{value}</ValueCell>
          </tr>
        )
      })}
    </tbody>
  </Grid>
)

const wallProps = [
  [1, 'key', '名称', 'QTQ-1'],
  [2, 'plain', '厚度(mm)', '240'],
  [3, 'plain', '轴线距左墙皮距离', '(120)'],
  [4, 'key', '砌体通长筋', '2 ф6@500'],
  [5, 'key', '横向短筋'],
  [6, 'plain', '砌体墙类型', '框架间填充墙'],
  [7, 'plain', '备注'],
  [8, '-', '其它属性'],
  [9, 'child', '汇总信息', '砌体通长拉结筋'],
  [10, 'child', '钢筋搭接', '(56)'],
  [11, 'child', '计算设置', '按默认计算设置计算'],
  [12, 'child', '搭接设置', '按默认搭接设置计算'],
  [13, 'child', '起点顶标高(m)', '层顶标高(20.37)'],
  [14, 'child', '终点顶标高(m)', '层顶标高(20.37)'],
  [15, 'child', '起点底标高(m)', '层底标高(17.57)'],
  [16, 'last', '终点底标高(m)', '层底标高(17.57)'],
  [17, '+', '显示样式'],
]

const calcSettings = [
  [1, '+', '构造柱'],
  [17, '+', '圈梁'],
  [33, '-', '砌体加筋'],
  [34, 'child', '砌体加筋保护层', '60'],
  [35, 'child', '砌体加筋锚固长度', '0', true],
  [36, 'child', '砌体加筋两端的起始距离', 's/2'],
  [37, 'child', '端部是否带弯折', '是'],
  [38, 'child', '端部弯折长度', '0', true],
  [39, 'child', '通长加筋遇构造柱是否贯通', '是'],
  [40, 'child', '砌体加筋根数计算方式', '向上取整+1'],
  [41, 'last', '砌体加筋采用植筋时，植筋锚固深度', '10*d'],
  [42, '+', '过梁'],
]

/* ---------- floating windows ---------- */

const Palette = styled.section`
  position: absolute;
  left: 57px;
  top: 188px;
  width: 281px;
  height: 489px;
  padding: 0 1px;
  border: 1px solid #9a9a9a;
  border-top: 0;
  background: #fff;
  box-shadow: 2px 3px 12px rgba(0, 0, 0, .35);
`

const PaletteHead = styled.div`
  display: flex;
  align-items: center;
  justify-content: space-between;
  height: 30px;
  padding-left: 6px;
  margin-right: -1px;
  color: #999;
`

const PaletteClose = styled.button`
  width: 19px;
  height: 19px;
  margin-top: 2px;
  background: #d9d9d9;
  color: #fff;
  line-height: 16px;
`

const PaletteBody = styled.div`
  padding-top: 1px;
  border-top: 1px solid #a0a0a0;
`

const Dialog = styled.section`
  position: absolute;
  left: 406px;
  top: 161px;
  width: 554px;
  height: 440px;
  border: 1px solid #2b8be8;
  background: #f0f0f0;
  box-shadow: 0 4px 16px rgba(0, 0, 0, .4);
`

const DialogHead = styled.div`
  display: flex;
  align-items: center;
  height: 30px;
  padding: 0 16px 0 8px;
  gap: 5px;
  background: #fff;

  h2 {
    flex: 1;
    margin: 0;
    font: inherit;
  }
`

const DialogButton = styled.button`
  display: flex;
  width: 14px;
  margin-left: 27px;
  justify-content: center;
`

const DialogGrid = styled.div`
  height: 315px;
  margin: 3px;
  padding: 1px;
  border: 1px solid #a0a0a0;
  background: #fff;
`

const Note = styled.p`
  margin: 4px 3px 0;
`

const DialogActions = styled.div`
  display: flex;
  justify-content: flex-end;
  gap: 15px;
  padding: 39px 13px 0;

  button {
    width: 72px;
    height: 23px;
    border: 1px solid #adadad;
    background: #e1e1e1;
  }
`

const Marker = styled.svg`
  position: absolute;
  left: ${props => props.$left}px;
  top: ${props => props.$top}px;
  pointer-events: none;
`

const ImeBar = styled.div`
  position: absolute;
  left: 975px;
  top: 19px;
  display: flex;
  align-items: center;
  width: 177px;
  height: 24px;
  padding-left: 24px;
  gap: 7px;
  border: 1px solid #a3c3e6;
  background: #f7fafd;
  color: #1f78d1;

  b {
    width: 16px;
    font-size: 16px;
  }
`

const ImeLogo = styled.div`
  position: absolute;
  left: -10px;
  top: -5px;
`

const Ball = styled.div`
  position: absolute;
  left: 880px;
  top: -28px;
  width: 48px;
  height: 48px;
  padding-top: 25px;
  border: 2px solid #9fa6a1;
  border-radius: 50%;
  background: radial-gradient(circle at 50% 70%, #4ccb62, #36b95a);
  color: #fff;
  font-weight: 700;
  text-align: center;
  box-shadow: 0 2px 5px rgba(0, 0, 0, .4);
`

/* ---------- status bar and taskbar ---------- */

const StatusBar = styled.footer`
  display: flex;
  height: 20px;
  margin-top: 4px;
  gap: 2px;
  ${gridFont}
`

const StatusCell = styled.span`
  flex: ${props => (props.$width ? 'none' : '1')};
  width: ${props => (props.$width ? `${props.$width}px` : 'auto')};
  padding-left: 1px;
  border: 1px solid #d4d4d4;
  background: linear-gradient(#fcfcfc, #f2f2f2);
  line-height: 18px;
`

const Taskbar = styled.div`
  display: flex;
  height: 40px;
  background: #020c10;
  color: #fff;
`

const StartButton = styled.button`
  display: flex;
  align-items: center;
  justify-content: center;
  width: 48px;
  background: #000;
`

const Search = styled.label`
  display: flex;
  align-items: center;
  width: 344px;
  padding: 0 14px 0 8px;
  gap: 5px;
  background: #333;

  input {
    flex: 1;
    min-width: 0;
    border: 0;
    padding: 0;
    outline: 0;
    background: none;
    font-size: 14px;
    color: #fff;
  }

  input::placeholder { color: #999; }
`

const Task = styled.button`
  display: flex;
  align-items: center;
  justify-content: center;
  width: ${props => (props.$active ? 48 : 40)}px;
  margin: 0 ${props => (props.$active ? 5 : 9)}px 0 0;
  border-bottom: 2px solid ${props => (props.$running ? '#76b9ed' : 'transparent')};
  padding-top: 2px;
  background: ${props => (props.$active ? '#333f43' : 'none')};
`

const Apps = styled.div`
  display: flex;
  flex: 1;
  padding-left: 6px;
`

const Tray = styled.div`
  display: flex;
  align-items: center;
  gap: 9px;
`

const TwoLines = styled.div`
  width: ${props => props.$width}px;
  text-align: center;
  line-height: 18px;
`

const NoticeButton = styled.button`
  position: relative;
  width: 36px;
  height: 30px;
  margin-right: 6px;
`

const Count = styled.span`
  position: absolute;
  right: 0;
  bottom: 0;
  min-width: 22px;
  border: 1px solid #999;
  border-radius: 9px;
  background: #333;
  color: #fff;
  font-weight: 700;
`

const apps = [
  ['fan', '云盘', (
    <g fill="#e4e6e7">
      {[0, 72, 144, 216, 288].map(turn => (
        <path key={turn} transform={`rotate(${turn} 12 12)`} d="M12 11.500Q6 9 7 4 8.500.500 13 1q4 1 3.500 5-.5 2-2 2.500-2 .500-2.500 3z" />
      ))}
    </g>
  )],
  ['g', 'G', (
    <g fill="none" stroke="#d8dadb" strokeWidth="1.3">
      <path d="M21 3Q17 5 12 4 4 5 3.500 13q1 8 9 8.500 7-1 7.500-8-4-3-7 .5 3 0 2.500 3-3 2-6-1-1.500-5 3-7.500Q18 9 21 3z" />
    </g>
  )],
  ['edge', 'Edge', <path d="M2 11Q4 2 12 2q10 0 10 11H8q1 6 7 6 3 0 6-2v4q-3 2-8 2Q4 22 4 14q0-4 4-6-4 0-6 3zM8 10h8q0-4-4-4-3 0-4 4z" fill="#1377d4" />],
  ['store', '应用商店', (
    <g>
      <path d="M2 8l20-2v17L2 21z" fill="#fff" />
      <path d="M7 8V4q4-4 8 0v3" fill="none" stroke="#fff" strokeWidth="1.5" />
      <path d="M6 11l5-.5V14H6zM12 10.400l6-.4v4h-6zM6 15h5v3.500L6 18zM12 15h6v4l-6-.5z" fill="#020c10" />
    </g>
  )],
  ['files', '文件资源管理器', (
    <g>
      <path d="M1 3h8l2 2h12v14H1z" fill="#f6d777" />
      <path d="M1 7h22v12H1z" fill="#fce9a6" />
      <path d="M5 12h14v9h-4v-5H9v5H5z" fill="#37a9dc" />
    </g>
  )],
  ['ie', 'Internet Explorer', (
    <g fill="none">
      <path d="M6 13.500h14.500Q20 6 13.500 6 6 6.500 6 14q0 7 7.500 7.500 5 0 7-4.500" stroke="#45a8ea" strokeWidth="3.5" />
      <path d="M2 22Q-1 18 8 9 19 0 22 3q1 2-1 5" stroke="#f3c52b" strokeWidth="2" />
    </g>
  )],
  ['ggj', 'GGJ2013', <g transform="scale(1.5)">{logo}</g>],
  ['note', '便签', (
    <g>
      <rect x=".5" y=".5" width="23" height="23" rx="2" fill="#f39a1e" />
      <path d="M3 5h15l1 15H5z" fill="#fff6d8" />
      <path d="M6 9h9M6 12h7M7 15h6" stroke="#8a6a3a" />
      <path d="M11 15L20 2l2 1-8 13-3 2z" fill="#a3311b" />
    </g>
  )],
  ['g2', '广联达', <path d="M23 1Q20 4 13 2 3 3 1.500 12 2 22 12 23q10-1 11-10.500Q18 8 13 12q4 0 3.500 4-4 3-7-1Q8 9 13 7.500 21 8 23 1z" fill="#1a93e0" />],
  ['se', '浏览器', (
    <g fill="none">
      <circle cx="12" cy="12" r="10.5" fill="#57c22d" stroke="#d9f2cc" />
      <path d="M7 12.500h10.500Q17 7 12 7t-5 5.500q0 5 5 5.500 3.500 0 5-3" stroke="#fff" strokeWidth="2.5" />
      <path d="M2 19Q0 22 7 20M17 3q5-2 4 2" stroke="#2f8f1c" strokeWidth="1.5" />
    </g>
  )],
]

const TaskbarPanel = () => (
  <Taskbar>
    <StartButton aria-label="开始">
      <Svg width="16" height="16" viewBox="0 0 16 16"><path d="M0 2.200l6.500-.9v6.200H0zM7.500 1.200L16 0v7.500H7.500zM0 8.500h6.500v6.200L0 13.800zM7.500 8.500H16V16l-8.500-1.200z" fill="#fff" /></Svg>
    </StartButton>
    <Search>
      <Svg width="23" height="23" viewBox="0 0 23 23"><circle cx="11.5" cy="11.5" r="9" fill="none" stroke="#eee" strokeWidth="3" /></Svg>
      <input aria-label="搜索" placeholder="在这里输入你要搜索的内容" />
      <Svg width="12" height="18" viewBox="0 0 12 18"><path d="M3.500 1.500h5v10h-5zM1 9v4.500h10V9M6 14v3M3 17h6" fill="none" stroke="#aaa" /></Svg>
    </Search>
    <Apps>
      {apps.map(([id, title, drawing], i) => (
        <Task key={id} aria-label={title} $active={id === 'ggj'} $running={i > 5}>
          <Svg width="24" height="24" viewBox="0 0 24 24">{drawing}</Svg>
        </Task>
      ))}
    </Apps>
    <Tray>
      <TwoLines $width={70}>35%<br />CPU使用</TwoLines>
      <Svg width="12" height="8" viewBox="0 0 12 8"><path d="M.5 7L6 1.500 11.500 7" fill="none" stroke="#fff" strokeWidth="1.3" /></Svg>
      <Svg width="17" height="14" viewBox="0 0 17 14">
        <path d="M6.500 4.500h9v7h-9zM2 1v3M5 1v3M1 4h5v2L4 8v4h2" fill="none" stroke="#fff" strokeWidth="1.2" />
        <path d="M8 6h6v4H8zM16 7h1v3h-1z" fill="#fff" />
      </Svg>
      <Svg width="15" height="15" viewBox="0 0 15 15">
        <path d="M2 13Q3 3 13 3M5 14Q6 7 13 6.500M8.500 14Q9 10.500 13 10" fill="none" stroke="#bbb" strokeWidth="1.2" />
        <circle cx="12" cy="13" r="1.5" fill="#fff" />
      </Svg>
      <Svg width="17" height="14" viewBox="0 0 17 14"><path d="M1 5h3l3-3v10L4 9H1zM9 5q1.500 2 0 4M11.500 3q3 4 0 8M14 1.500q4 5.500 0 11" fill="none" stroke="#fff" /></Svg>
      <Svg width="23" height="14" viewBox="0 0 23 14">
        <path d="M.5.5h22v13H.5z" fill="none" stroke="#fff" />
        <path d="M3 4.500h17M3 7.500h17" stroke="#fff" strokeDasharray="2 1" />
        <path d="M6 10.500h11" stroke="#fff" />
      </Svg>
      <TwoLines $width={16}>中</TwoLines>
      <Icon name="sogou" />
      <TwoLines $width={76}>18:40<br />2017/10/7</TwoLines>
      <NoticeButton aria-label="通知">
        <Svg width="18" height="17" viewBox="0 0 18 17">
          <path d="M1 1h16v12h-7l-4 4v-4H1z" fill="#fff" />
          <path d="M4 4.500h10M4 7.500h10M4 10.500h5" stroke="#000" />
        </Svg>
        <Count>20</Count>
      </NoticeButton>
    </Tray>
  </Taskbar>
)

const HiddenSvg = styled.svg`
  position: absolute;
  width: 0;
  height: 0;
`

const App = () => (
  <Screen>
    <GlobalStyle />
    <HiddenSvg>
      <defs>
        <linearGradient id="sky" x1="0" y1="0" x2="1" y2="1">
          <stop offset="0" stopColor="#eaf2ff" />
          <stop offset="1" stopColor="#6f9df0" />
        </linearGradient>
      </defs>
    </HiddenSvg>

    <TitleBar>
      <Icon name="logo" />
      <WindowTitle>{'广联达BIM钢筋算量软件 GGJ2013 - [C:\\Users\\Administrator.PC-20141127NRHM\\Desktop\\白龙村-2016-08-25-13-27-07(2166版).GGJ12]'}</WindowTitle>
      <WindowButton aria-label="最小化"><Svg width="11" height="11" viewBox="0 0 11 11"><path d="M0 5.500h10" stroke="#999" /></Svg></WindowButton>
      <WindowButton aria-label="还原"><Svg width="11" height="11" viewBox="0 0 11 11"><path d="M.5 2.500h8v8h-8zM2.500 2.500v-2h8v8h-2" fill="none" stroke="#999" /></Svg></WindowButton>
      <WindowButton aria-label="关闭"><Svg width="11" height="11" viewBox="0 0 11 11"><path d="M0 0l11 11M11 0L0 11" stroke="#999" /></Svg></WindowButton>
    </TitleBar>

    <AccountRow>
      <AccountBar>
        <Hint href="#">构件钢筋怎么布置查看</Hint>
        <Icon name="cloudCheck" />
        <Phone>13907298339<Caret space={0} /></Phone>
        <Coins>造价豆:0</Coins>
        <Icon name="bell" />
        <More />
      </AccountBar>
    </AccountRow>

    <ToolRow $height={30}>
      <Bar $min={150} $pad={4}>
        <Tool icon="newDoc" aria-label="新建" />
        <Tool icon="open" caret aria-label="打开" />
        <Tool icon="save" aria-label="保存" />
        <Sep />
        <Tool icon="undo" caret aria-label="撤销" />
        <More />
      </Bar>
      <Bar $min={549} $pad={4}>
        <Tools items={mainTools} />
        <More />
      </Bar>
      <Bar $grow $pad={1}>
        <Tool icon="rect2d" label="二维" caret $field />
        <Tools items={viewTools} />
        <More />
      </Bar>
    </ToolRow>

    <Body>
      <Navigation />
      <Workspace>
        <ToolRow $height={27}>
          <Bar><Grip /><Tools items={editTools} /></Bar>
        </ToolRow>
        <ToolRow $height={29}>
          <Bar>
            <Grip $space={3} />
            <ComboBox label="楼层" value="第6层" width={58} />
            <ComboBox label="构件大类" value="墙" width={70} />
            <ComboBox label="构件类型" value="砌体墙" width={70} />
            <ComboBox label="构件" value="QTQ-1" width={70} />
            <Sep $space={3} />
            <Tool icon="props" label="属性" $active $next={-1} />
            <Tool icon="editBar" label="编辑钢筋" $active $next={3} />
            <Tool icon="list" label="构件列表" />
            <Tool icon="picker" label="拾取构件" />
          </Bar>
          <Bar $gap={70}><Grip /><Tools items={axisTools} /></Bar>
        </ToolRow>
        <ToolRow $height={28}>
          <Bar>
            <Grip $space={2} />
            <Tool icon="cursor" label="选择" $active />
            <ArrowButton aria-label="选择方式"><Caret /></ArrowButton>
            <Sep />
            <Tool icon="lineTool" label="直线" />
            <Tool icon="pointLen" label="点加长度" />
            <Tool icon="arc3" label="三点画弧" caret />
            <ComboBox label="画法" value="" width={54} gap={7} />
            <Tools items={wallTools} />
          </Bar>
          <Bar $right><Grip $space={26} /></Bar>
        </ToolRow>
        <Drawing />
        <BarPanel />
      </Workspace>
    </Body>

    <StatusBar>
      <StatusCell $width={148}>X=58231 Y=8887</StatusCell>
      <StatusCell $width={78}>层高:2.8m</StatusCell>
      <StatusCell $width={98}>底标高:17.57m</StatusCell>
      <StatusCell $width={48}>1(1)</StatusCell>
      <StatusCell>在此设置墙的计算规则</StatusCell>
      <StatusCell $width={70}>761.4 FPS</StatusCell>
    </StatusBar>
    <TaskbarPanel />

    <Palette>
      <PaletteHead>属性编辑器<PaletteClose aria-label="关闭">x</PaletteClose></PaletteHead>
      <PaletteBody>
        <PropertyGrid
          width={276}
          columns={[21, 121, 134]}
          heads={['属性名称', '属性值']}
          rows={wallProps}
          current={11}
          selectName
          nameBg="#fff"
        />
      </PaletteBody>
    </Palette>

    <Dialog role="dialog" aria-label="计算参数设置">
      <DialogHead>
        <Icon name="logo" />
        <h2>计算参数设置</h2>
        <DialogButton aria-label="最小化"><Svg width="11" height="11" viewBox="0 0 11 11"><path d="M0 5.500h10" stroke="#bbb" /></Svg></DialogButton>
        <DialogButton aria-label="最大化"><Svg width="11" height="11" viewBox="0 0 11 11"><path d="M.5.5h10v10H.5z" fill="none" stroke="#000" /></Svg></DialogButton>
        <DialogButton aria-label="关闭"><Svg width="11" height="11" viewBox="0 0 11 11"><path d="M0 0l11 11M11 0L0 11" stroke="#000" /></Svg></DialogButton>
      </DialogHead>
      <DialogGrid>
        <PropertyGrid
          width={541}
          columns={[21, 401, 119]}
          heads={['类型名称', '设置值']}
          rows={calcSettings}
          current={38}
          nameBg="#ffffe1"
          wide
        />
      </DialogGrid>
      <Note>提示信息：输入格式：具体数值。</Note>
      <DialogActions>
        <button>确定</button>
        <button>取消</button>
      </DialogActions>
    </Dialog>

    <ImeBar>
      <ImeLogo><Icon name="sogou" size={28} /></ImeLogo>
      <b>中</b>
      <Svg width="16" height="14" viewBox="0 0 16 14"><circle cx="4" cy="4" r="2" fill="none" stroke="#1f78d1" strokeWidth="1.5" /><path d="M9 7h4q0 4-4 6l1-3H9z" fill="#1f78d1" /></Svg>
      <Svg width="14" height="16" viewBox="0 0 14 16"><rect x="4" width="6" height="10" rx="3" fill="#1f78d1" /><path d="M1.500 7q0 5 5.500 5t5.500-5M7 12v3M4 15h6" fill="none" stroke="#1f78d1" strokeWidth="1.5" /></Svg>
      <Svg width="16" height="12" viewBox="0 0 16 12"><rect x=".7" y=".7" width="14.6" height="10.6" fill="none" stroke="#1f78d1" strokeWidth="1.4" /><path d="M3 3.500h10M3 6h10M5 8.500h6" stroke="#1f78d1" strokeDasharray="1.500 1" /></Svg>
      <Svg width="17" height="15" viewBox="0 0 17 15"><circle cx="6" cy="4" r="3.5" fill="#b4bfd3" /><path d="M0 14q0-6 6-6t6 6zM8 8h9v6H8z" fill="#b4bfd3" /><path d="M11 10v3M13.500 10v3" stroke="#fff" /></Svg>
      <Svg width="15" height="13" viewBox="0 0 15 13"><path d="M4 0q3.500 3 7 0l4 3-2 3-1.500-1v8h-8V5L2 6 0 3z" fill="#1f78d1" /></Svg>
      <Svg width="15" height="15" viewBox="0 0 15 15"><path d="M1 13l7-7q-1-4 3-5.500L10 3l2 2 3-1q-1 5-5.500 4L3 15z" fill="#1f78d1" /></Svg>
    </ImeBar>
    <Ball>72</Ball>

    <Marker $left={54} $top={412} width="310" height="62" viewBox="0 0 310 62">
      <ellipse cx="154" cy="31" rx="151" ry="26" fill="none" stroke="#f00" strokeWidth="7" />
    </Marker>
    <Marker $left={803} $top={229} width="127" height="258" viewBox="0 0 127 258">
      <ellipse cx="63" cy="129" rx="59" ry="125" fill="none" stroke="#f00" strokeWidth="7" />
    </Marker>
  </Screen>
)

export default App
